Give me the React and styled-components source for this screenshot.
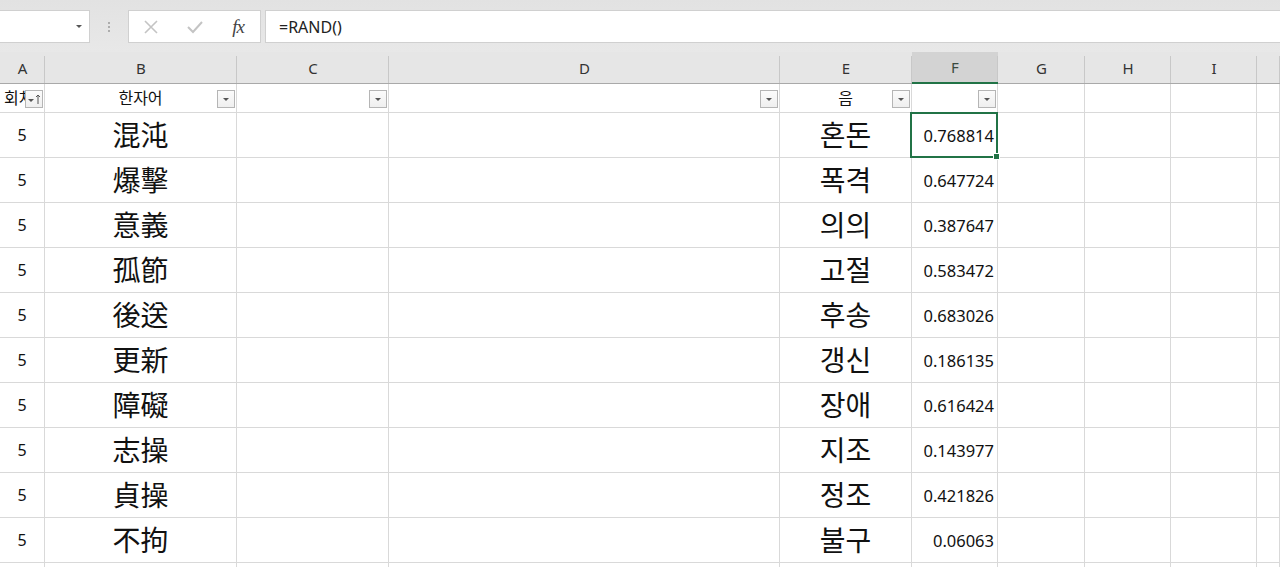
import React from 'react';
import styled, { createGlobalStyle } from 'styled-components';

const GlobalStyle = createGlobalStyle`
  html, body { margin: 0; padding: 0; background: #fff; }
  body { font-family: "Noto Sans", "Noto Sans CJK KR", sans-serif; overflow: hidden; }
`;

const COLS = ['A', 'B', 'C', 'D', 'E', 'F', 'G', 'H', 'I', ''];
const TEMPLATE = '45px 192px 152px 391px 132px 86px 87px 86px 86px 1fr';

const rows = [
  ['混沌', '혼돈', '0.768814'],
  ['爆擊', '폭격', '0.647724'],
  ['意義', '의의', '0.387647'],
  ['孤節', '고절', '0.583472'],
  ['後送', '후송', '0.683026'],
  ['更新', '갱신', '0.186135'],
  ['障礙', '장애', '0.616424'],
  ['志操', '지조', '0.143977'],
  ['貞操', '정조', '0.421826'],
  ['不拘', '불구', '0.06063'],
  ['', '', ''],
];

const Page = styled.div`
  width: 1280px;
  height: 567px;
  overflow: hidden;
  background: #e6e6e6;
`;

const FormulaBar = styled.div`
  height: 52px;
  box-sizing: border-box;
  padding-top: 10px;
  display: flex;
  align-items: flex-start;
  background: linear-gradient(#e2e2e2, #e8e8e8);
`;

const NameBox = styled.div`
  width: 90px;
  height: 33px;
  box-sizing: border-box;
  background: #fff;
  border: 1px solid #d0d0d0;
  border-left: none;
  display: flex;
  align-items: center;
  justify-content: flex-end;
  padding-right: 6px;
`;

const Grip = styled.div`
  width: 38px;
  height: 33px;
  display: flex;
  flex-direction: column;
  align-items: center;
  justify-content: center;
  gap: 2px;
  span { width: 2px; height: 2px; background: #9a9a9a; border-radius: 1px; }
`;

const ButtonBox = styled.div`
  width: 133px;
  height: 33px;
  box-sizing: border-box;
  background: #fff;
  border: 1px solid #d0d0d0;
  display: flex;
  align-items: center;
`;

const BarIcon = styled.div`
  width: 44px;
  display: flex;
  justify-content: center;
  align-items: center;
  color: ${p => (p.$active ? '#444' : '#c4c4c4')};
`;

const Fx = styled.span`
  font-family: "Liberation Serif", "DejaVu Serif", serif;
  font-style: italic;
  font-size: 19px;
  color: #444;
  letter-spacing: -1px;
`;

const FormulaInput = styled.div`
  flex: 1;
  margin-left: 4px;
  height: 33px;
  box-sizing: border-box;
  background: #fff;
  border: 1px solid #d0d0d0;
  border-right: none;
  display: flex;
  align-items: center;
  padding-left: 13px;
  font-size: 16px;
  color: #222;
`;

const Grid = styled.div`
  display: grid;
  grid-template-columns: ${TEMPLATE};
  background: #fff;
`;

const HeadCell = styled.div`
  height: 32px;
  box-sizing: border-box;
  background: ${p => (p.$selected ? '#d3d3d3' : '#e6e6e6')};
  border-bottom: ${p => (p.$selected ? '2px solid #217346' : '1px solid #a9a9a9')};
  display: flex;
  align-items: center;
  justify-content: center;
  position: relative;
  font-size: 15px;
  color: ${p => (p.$selected ? '#3a4a40' : '#333')};
  &::after {
    content: '';
    position: absolute;
    right: 0;
    top: 4px;
    bottom: 0;
    width: 1px;
    background: #c8c8c8;
  }
`;

const Cell = styled.div`
  height: ${p => p.$h}px;
  box-sizing: border-box;
  border-right: 1px solid #d9d9d9;
  border-bottom: 1px solid #d9d9d9;
  position: relative;
  z-index: ${p => (p.$active ? 2 : 'auto')};
  display: flex;
  align-items: center;
  justify-content: ${p => p.$align || 'center'};
  padding: ${p => (p.$align === 'flex-end' ? '0 3px 0 0' : p.$align === 'flex-start' ? '0 0 0 4px' : '0')};
  font-size: ${p => p.$size || 16}px;
  color: #111;
  white-space: nowrap;
  overflow: ${p => (p.$active ? 'visible' : 'hidden')};
`;

const Selection = styled.div`
  position: absolute;
  left: -2px;
  top: -1px;
  right: -1px;
  bottom: -1px;
  border: 2px solid #217346;
  pointer-events: none;
  &::after {
    content: '';
    position: absolute;
    right: -4px;
    bottom: -4px;
    width: 5px;
    height: 5px;
    background: #217346;
    border: 1px solid #fff;
  }
`;

const FilterBtn = styled.div`
  position: absolute;
  right: 1px;
  top: 6px;
  width: 18px;
  height: 18px;
  box-sizing: border-box;
  border: 1px solid #b5b5b5;
  background: linear-gradient(#fbfbfb, #efefef);
  display: flex;
  align-items: center;
  justify-content: center;
`;

const FilterLabel = styled.span`
  font-size: 16px;
  margin-top: -3px;
`;

const BigText = styled.span`
  font-family: "Noto Sans CJK KR", "Noto Sans CJK TC", sans-serif;
  font-size: 28px;
  line-height: 1;
  color: #111;
  margin-top: -2px;
`;

const Caret = () => (
  <svg width="8" height="5" viewBox="0 0 8 5"><path d="M1 1h6L4 4z" fill="#555" /></svg>
);

const SortCaret = () => (
  <svg width="16" height="14" viewBox="0 0 16 14">
    <path d="M2 7h6L5 10z" fill="#555" />
    <path d="M12 3v9M10 5l2-2 2 2" stroke="#555" strokeWidth="1" fill="none" />
  </svg>
);

const filterCell = (i) => {
  const head = { 1: '한자어', 4: '음' };
  if (i === 0) {
    return (
      <Cell key={i} $h={29} $align="flex-start" $size={16}>
        <FilterLabel>회차</FilterLabel>
        <FilterBtn><SortCaret /></FilterBtn>
      </Cell>
    );
  }
  const hasBtn = i >= 1 && i <= 5;
  return (
    <Cell key={i} $h={29} $size={16}>
      {head[i] && <FilterLabel>{head[i]}</FilterLabel>}
      {hasBtn && <FilterBtn><Caret /></FilterBtn>}
    </Cell>
  );
};

export default function App() {
  return (
    <>
      <GlobalStyle />
      <Page>
        <FormulaBar>
          <NameBox><Caret /></NameBox>
          <Grip><span /><span /><span /></Grip>
          <ButtonBox>
            <BarIcon>
              <svg width="16" height="16" viewBox="0 0 16 16"><path d="M2 2l12 12M14 2L2 14" stroke="currentColor" strokeWidth="1.6" /></svg>
            </BarIcon>
            <BarIcon>
              <svg width="18" height="16" viewBox="0 0 18 16"><path d="M2 8l5 5L16 3" stroke="currentColor" strokeWidth="2" fill="none" /></svg>
            </BarIcon>
            <BarIcon $active><Fx>fx</Fx></BarIcon>
          </ButtonBox>
          <FormulaInput>=RAND()</FormulaInput>
        </FormulaBar>
        <Grid>
          {COLS.map((c, i) => (
            <HeadCell key={'h' + i} $selected={c === 'F'}>{c}</HeadCell>
          ))}
          {COLS.map((c, i) => filterCell(i))}
          {rows.map((r, ri) => COLS.map((c, i) => {
            const empty = r[0] === '';
            let content = null;
            let align;
            let size;
            if (!empty) {
              if (i === 0) content = '5';
              if (i === 1) content = <BigText>{r[0]}</BigText>;
              if (i === 4) content = <BigText>{r[1]}</BigText>;
              if (i === 5) { content = r[2]; align = 'flex-end'; size = 16.5; }
            }
            const active = ri === 0 && i === 5;
            return (
              <Cell key={ri + '-' + i} $h={45} $align={align} $size={size} $active={active}>
                {content}
                {active && <Selection />}
              </Cell>
            );
          }))}
        </Grid>
      </Page>
    </>
  );
}
